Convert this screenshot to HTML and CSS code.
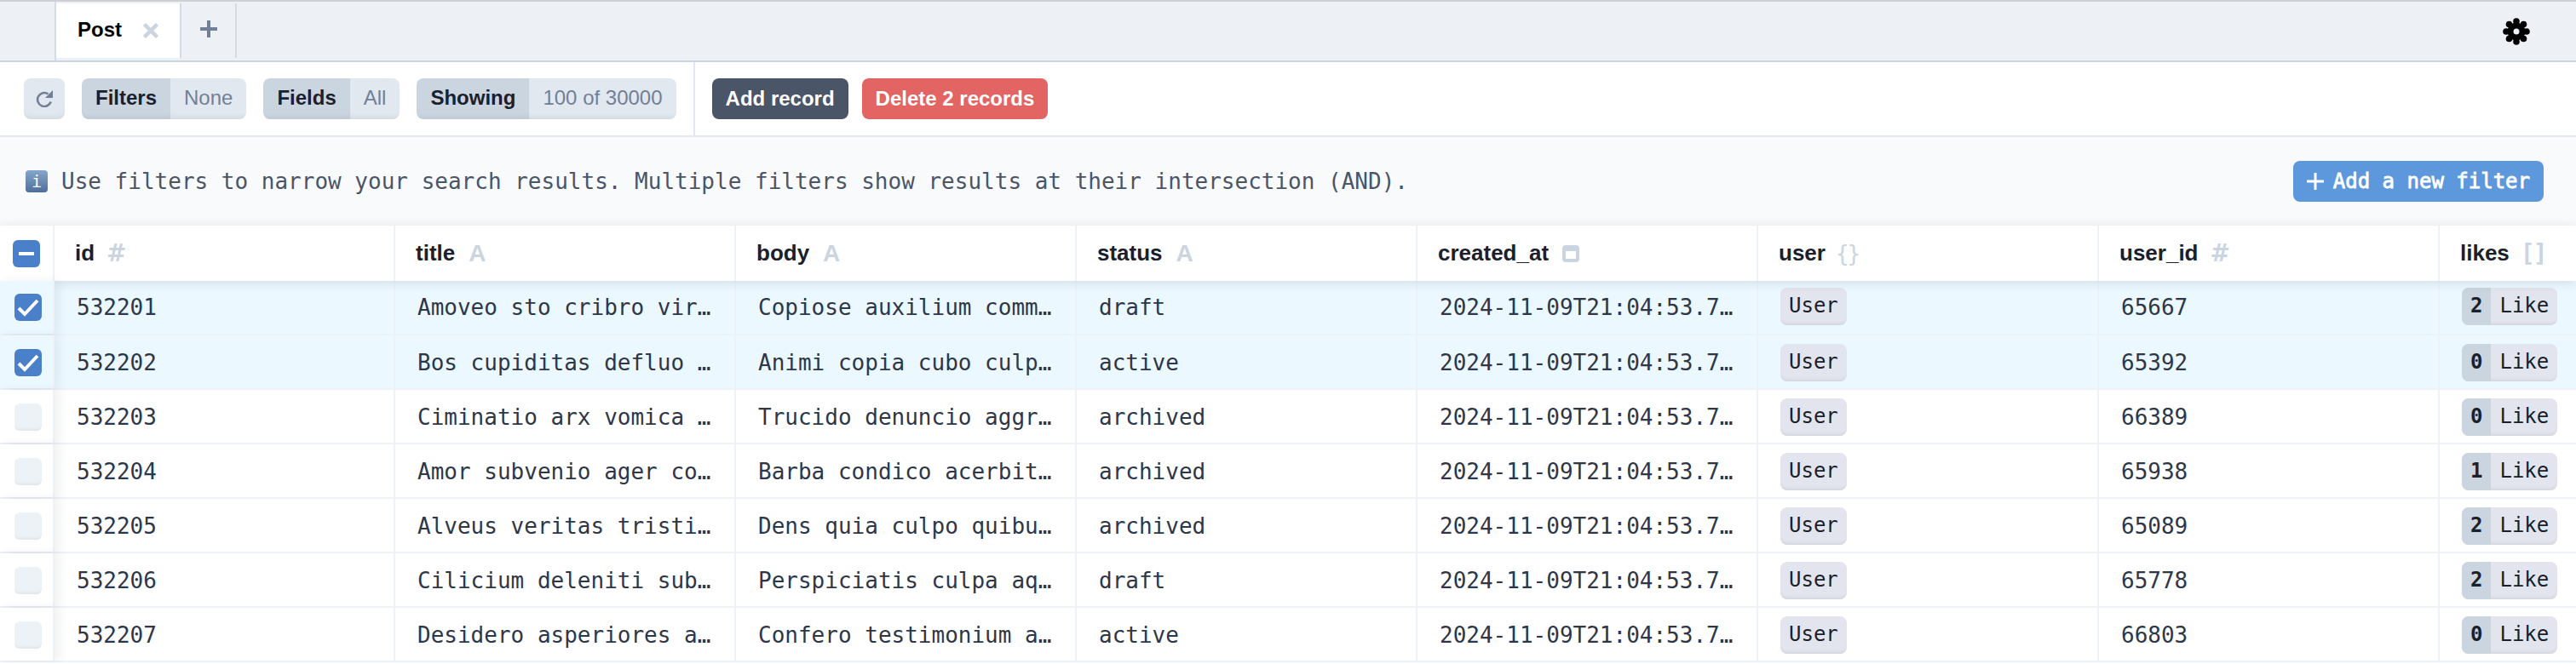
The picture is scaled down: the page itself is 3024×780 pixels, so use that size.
FILE: index.html
```html
<!DOCTYPE html>
<html>
<head>
<meta charset="utf-8">
<title>Prisma Studio</title>
<link rel="stylesheet" href="styles.css">
</head>
<body>

<div class="tabbar">
	<div class="tab-gutter"></div>
	<div class="tab">
		<span class="tab-name">Post</span>
		<svg class="tab-close" width="18" height="18" viewBox="0 0 18 18"><path d="M1.500 1.500L16.500 16.500M16.500 1.500L1.500 16.500"/></svg>
	</div>
	<div class="tab-add">
		<svg width="20" height="20" viewBox="0 0 20 20"><path d="M10 0V20M0 10H20"/></svg>
	</div>
	<div class="gear">
		<svg width="32" height="32" viewBox="0 0 32 32">
			<circle cx="16" cy="16" r="10.500"/>
			<circle cx="16" cy="4" r="3.800"/>
			<circle cx="16" cy="28" r="3.800"/>
			<circle cx="4" cy="16" r="3.800"/>
			<circle cx="28" cy="16" r="3.800"/>
			<circle cx="7.500" cy="7.500" r="3.800"/>
			<circle cx="24.500" cy="7.500" r="3.800"/>
			<circle cx="7.500" cy="24.500" r="3.800"/>
			<circle cx="24.500" cy="24.500" r="3.800"/>
			<circle class="gear-hole" cx="16" cy="16" r="3.500"/>
		</svg>
	</div>
</div>

<div class="toolbar">
	<div class="btn btn-icon">
		<svg width="20" height="20" viewBox="0 0 20 20"><path class="arc" d="M17.700 13.500A8 8 0 1 1 14.500 4.300"/><polygon points="20,0 20,9 11,9"/></svg>
	</div>
	<div class="btn-group"><span class="seg-key">Filters</span><span class="seg-val">None</span></div>
	<div class="btn-group"><span class="seg-key">Fields</span><span class="seg-val">All</span></div>
	<div class="btn-group"><span class="seg-key">Showing</span><span class="seg-val">100 of 30000</span></div>
	<div class="actions">
		<div class="btn btn-dark">Add record</div>
		<div class="btn btn-red">Delete 2 records</div>
	</div>
</div>

<div class="filters">
	<span class="info-icon">i</span>
	<span class="info-text">Use filters to narrow your search results. Multiple filters show results at their intersection (AND).</span>
	<div class="btn-filter">
		<svg width="20" height="20" viewBox="0 0 20 20"><path d="M10 0V20M0 10H20"/></svg>
		Add a new filter
	</div>
</div>

<div class="table">
	<div class="row head">
		<div class="check-cell"><span class="check check-on"><svg width="32" height="32" viewBox="0 0 32 32"><path d="M7 16H25"/></svg></span></div>
		<div class="th">id<span class="type type-hash">#</span></div>
		<div class="th">title<span class="type">A</span></div>
		<div class="th">body<span class="type">A</span></div>
		<div class="th">status<span class="type">A</span></div>
		<div class="th">created_at<span class="cal"></span></div>
		<div class="th">user<span class="type type-thin">{}</span></div>
		<div class="th">user_id<span class="type type-hash">#</span></div>
		<div class="th">likes<span class="type type-mono">[]</span></div>
	</div>

	<div class="row selected">
		<div class="check-cell"><span class="check check-on"><svg width="32" height="32" viewBox="0 0 32 32"><path d="M5 17L12 24L27 8"/></svg></span></div>
		<div class="td">532201</div>
		<div class="td">Amoveo sto cribro vir…</div>
		<div class="td">Copiose auxilium comm…</div>
		<div class="td">draft</div>
		<div class="td">2024-11-09T21:04:53.7…</div>
		<div class="td td-btn"><span class="rel">User</span></div>
		<div class="td">65667</div>
		<div class="td td-btn"><span class="like"><b>2</b><span>Like</span></span></div>
	</div>
	<div class="row selected">
		<div class="check-cell"><span class="check check-on"><svg width="32" height="32" viewBox="0 0 32 32"><path d="M5 17L12 24L27 8"/></svg></span></div>
		<div class="td">532202</div>
		<div class="td">Bos cupiditas defluo …</div>
		<div class="td">Animi copia cubo culp…</div>
		<div class="td">active</div>
		<div class="td">2024-11-09T21:04:53.7…</div>
		<div class="td td-btn"><span class="rel">User</span></div>
		<div class="td">65392</div>
		<div class="td td-btn"><span class="like"><b>0</b><span>Like</span></span></div>
	</div>
	<div class="row">
		<div class="check-cell"><span class="check"></span></div>
		<div class="td">532203</div>
		<div class="td">Ciminatio arx vomica …</div>
		<div class="td">Trucido denuncio aggr…</div>
		<div class="td">archived</div>
		<div class="td">2024-11-09T21:04:53.7…</div>
		<div class="td td-btn"><span class="rel">User</span></div>
		<div class="td">66389</div>
		<div class="td td-btn"><span class="like"><b>0</b><span>Like</span></span></div>
	</div>
	<div class="row">
		<div class="check-cell"><span class="check"></span></div>
		<div class="td">532204</div>
		<div class="td">Amor subvenio ager co…</div>
		<div class="td">Barba condico acerbit…</div>
		<div class="td">archived</div>
		<div class="td">2024-11-09T21:04:53.7…</div>
		<div class="td td-btn"><span class="rel">User</span></div>
		<div class="td">65938</div>
		<div class="td td-btn"><span class="like"><b>1</b><span>Like</span></span></div>
	</div>
	<div class="row">
		<div class="check-cell"><span class="check"></span></div>
		<div class="td">532205</div>
		<div class="td">Alveus veritas tristi…</div>
		<div class="td">Dens quia culpo quibu…</div>
		<div class="td">archived</div>
		<div class="td">2024-11-09T21:04:53.7…</div>
		<div class="td td-btn"><span class="rel">User</span></div>
		<div class="td">65089</div>
		<div class="td td-btn"><span class="like"><b>2</b><span>Like</span></span></div>
	</div>
	<div class="row">
		<div class="check-cell"><span class="check"></span></div>
		<div class="td">532206</div>
		<div class="td">Cilicium deleniti sub…</div>
		<div class="td">Perspiciatis culpa aq…</div>
		<div class="td">draft</div>
		<div class="td">2024-11-09T21:04:53.7…</div>
		<div class="td td-btn"><span class="rel">User</span></div>
		<div class="td">65778</div>
		<div class="td td-btn"><span class="like"><b>2</b><span>Like</span></span></div>
	</div>
	<div class="row">
		<div class="check-cell"><span class="check"></span></div>
		<div class="td">532207</div>
		<div class="td">Desidero asperiores a…</div>
		<div class="td">Confero testimonium a…</div>
		<div class="td">active</div>
		<div class="td">2024-11-09T21:04:53.7…</div>
		<div class="td td-btn"><span class="rel">User</span></div>
		<div class="td">66803</div>
		<div class="td td-btn"><span class="like"><b>0</b><span>Like</span></span></div>
	</div>
</div>

</body>
</html>
```

FILE: styles.css
```css
* {
	box-sizing: border-box;
}

html,body {
	margin: 0;
	padding: 0;
	height: 100%;
}

body {
	font-family: "Liberation Sans", Arial, sans-serif;
	font-size: 24px;
	color: #1a202c;
	background: #fff;
	overflow: hidden;
}

/* tabs */
.tabbar {
	display: flex;
	align-items: flex-start;
	height: 73px;
	background: #edf0f5;
	border-top: 2px solid #cfd0d3;
	border-bottom: 2px solid #cbd5e0;
}

.tab-gutter {
	width: 66px;
	height: 100%;
	border-right: 2px solid #d3dbe5;
}

.tab {
	display: flex;
	align-items: center;
	width: 147px;
	height: 64px;
	margin-top: 2px;
	padding: 0 0 2px 25px;
	background: #fff;
	border-right: 2px solid #d3dbe5;
	font-weight: bold;
	color: #000;
}

.tab-close {
	margin: 2px 0 0 25px;
}
.tab-close path {
	stroke: #cbd5e0;
	stroke-width: 4.500;
	fill: none;
}

.tab-add {
	display: flex;
	align-items: center;
	justify-content: center;
	width: 65px;
	height: 64px;
	margin-top: 2px;
	padding-bottom: 4px;
	border-right: 2px solid #d3dbe5;
}
.tab-add path {
	stroke: #718096;
	stroke-width: 4;
	fill: none;
}

.gear {
	display: flex;
	align-items: center;
	height: 100%;
	margin-left: auto;
	margin-right: 54px;
}
.gear-hole {
	fill: #edf0f5;
}

/* toolbar */
.toolbar {
	display: flex;
	align-items: center;
	gap: 20px;
	height: 88px;
	padding-left: 28px;
	border-bottom: 2px solid #e2e8f0;
}

.btn {
	display: flex;
	align-items: center;
	justify-content: center;
	height: 48px;
	padding: 0 16px;
	border-radius: 8px;
	font-weight: bold;
}

.btn-icon {
	width: 48px;
	padding: 0;
	background: #e2e8f0;
	box-shadow: inset 0 -6px 6px -4px rgba(0,0,0,.08);
}
.btn-icon .arc {
	fill: none;
	stroke: #718096;
	stroke-width: 2.600;
}
.btn-icon polygon {
	fill: #718096;
}

.btn-group {
	display: flex;
	height: 48px;
	border-radius: 8px;
	overflow: hidden;
}

.seg-key {
	padding: 0 16px;
	line-height: 46px;
	font-weight: bold;
	background: #cbd5e0;
	box-shadow: inset 0 -6px 6px -4px rgba(0,0,0,.08);
}

.seg-val {
	padding: 0 16px;
	line-height: 46px;
	color: #718096;
	background: #e2e8f0;
	box-shadow: inset 0 -6px 6px -4px rgba(0,0,0,.08);
}

.actions {
	display: flex;
	align-items: center;
	gap: 16px;
	height: 100%;
	padding-left: 20px;
	border-left: 2px solid #e2e8f0;
}

.btn-dark {
	color: #fff;
	background: #4a5568;
}

.btn-red {
	color: #fff;
	background: #e26563;
}

/* filter hint */
.filters {
	display: flex;
	align-items: center;
	height: 104px;
	padding: 0 38px 0 30px;
	background: #f9fafc;
	font-family: "DejaVu Sans Mono", monospace;
	font-size: 26px;
	color: #4a5568;
}

.info-icon {
	width: 26px;
	height: 26px;
	margin-right: 16px;
	border-radius: 4px;
	background: linear-gradient(#86a6cb, #4d6f9b);
	color: #fff;
	font-size: 20px;
	line-height: 26px;
	text-align: center;
}

.btn-filter {
	display: flex;
	align-items: center;
	gap: 11px;
	height: 48px;
	margin-left: auto;
	padding: 0 16px;
	border-radius: 8px;
	background: #5c98db;
	color: #fff;
	font-size: 24px;
	-webkit-text-stroke: .8px #fff;
}
.btn-filter path {
	stroke: #fff;
	stroke-width: 3;
	fill: none;
}

/* table */
.table {
	font-family: "DejaVu Sans Mono", monospace;
	font-size: 26px;
	color: #2d3748;
}

.row {
	display: grid;
	grid-template-columns: 64px repeat(7, 400px) 160px;
	height: 64px;
	border-bottom: 2px solid #edf2f7;
}

.row.selected {
	background: #ebf8ff;
}

.head {
	position: relative;
	z-index: 1;
	height: 65px;
	background: #fff;
	border-bottom: 0;
	box-shadow: 0 2px 12px rgba(45,55,72,.14);
}

.check-cell {
	position: relative;
	z-index: 2;
	display: flex;
	align-items: center;
	justify-content: center;
	padding: 2px 0 0 4px;
	background: #fff;
	border-right: 2px solid #edf2f7;
	box-shadow: 6px 0 10px rgba(45,55,72,.07);
}
.selected .check-cell {
	background: #ebf8ff;
}
.head .check-cell {
	padding: 0;
	box-shadow: none;
}
.head + .row .check-cell {
	padding-top: 0;
}

.check {
	display: block;
	width: 32px;
	height: 32px;
	border-radius: 6px;
	background: #edf2f7;
	box-shadow: inset 0 -4px 4px -3px rgba(0,0,0,.08);
}
.check-on {
	background: #4a7fc9;
	box-shadow: none;
}
.check svg {
	display: block;
	fill: none;
	stroke: #fff;
	stroke-width: 4;
}

.th {
	display: flex;
	align-items: center;
	padding-left: 24px;
	border-right: 2px solid #edf2f7;
	font-family: "Liberation Sans", Arial, sans-serif;
	font-size: 26px;
	font-weight: bold;
	color: #1a202c;
}
.th:last-child,
.td:last-child {
	border-right: 0;
}

.type {
	margin-left: 16px;
	font-family: "Liberation Sans", Arial, sans-serif;
	font-size: 28px;
	font-weight: bold;
	color: #cbd5e0;
}
.type-hash {
	margin-left: 14px;
	font-family: "DejaVu Sans", sans-serif;
}
.type-mono {
	margin-left: 13px;
	font-family: "DejaVu Sans Mono", monospace;
	letter-spacing: -2px;
}
.type-thin {
	margin-left: 12px;
	font-family: "DejaVu Sans Mono", monospace;
	font-size: 26px;
	font-weight: normal;
	letter-spacing: -2px;
}

.cal {
	width: 20px;
	height: 20px;
	margin-left: 16px;
	border: 4px solid #cbd5e0;
	border-top-width: 7px;
	border-radius: 4px;
}

.td {
	padding: 0 24px 0 26px;
	line-height: 64px;
	white-space: nowrap;
	overflow: hidden;
	text-overflow: ellipsis;
	border-right: 2px solid #edf2f7;
}
.head + .row .td {
	line-height: 62px;
}

.td-btn {
	padding: 10px 0 0 26px;
	line-height: normal;
}
.head + .row .td-btn {
	padding-top: 8px;
	line-height: normal;
}

.rel {
	display: inline-block;
	height: 44px;
	padding: 0 10px;
	border-radius: 8px;
	background: #e2e5ed;
	box-shadow: inset 0 -4px 4px -3px rgba(0,0,0,.1);
	color: #1a202c;
	font-size: 24px;
	line-height: 42px;
}

.like {
	display: inline-flex;
	height: 44px;
	border-radius: 8px;
	overflow: hidden;
	background: #e2e5ed;
	box-shadow: inset 0 -4px 4px -3px rgba(0,0,0,.1);
	color: #1a202c;
	font-size: 24px;
	line-height: 42px;
}
.like b {
	padding: 0 10px;
	background: #cbd5e0;
}
.like span {
	padding: 0 10px;
}
```
